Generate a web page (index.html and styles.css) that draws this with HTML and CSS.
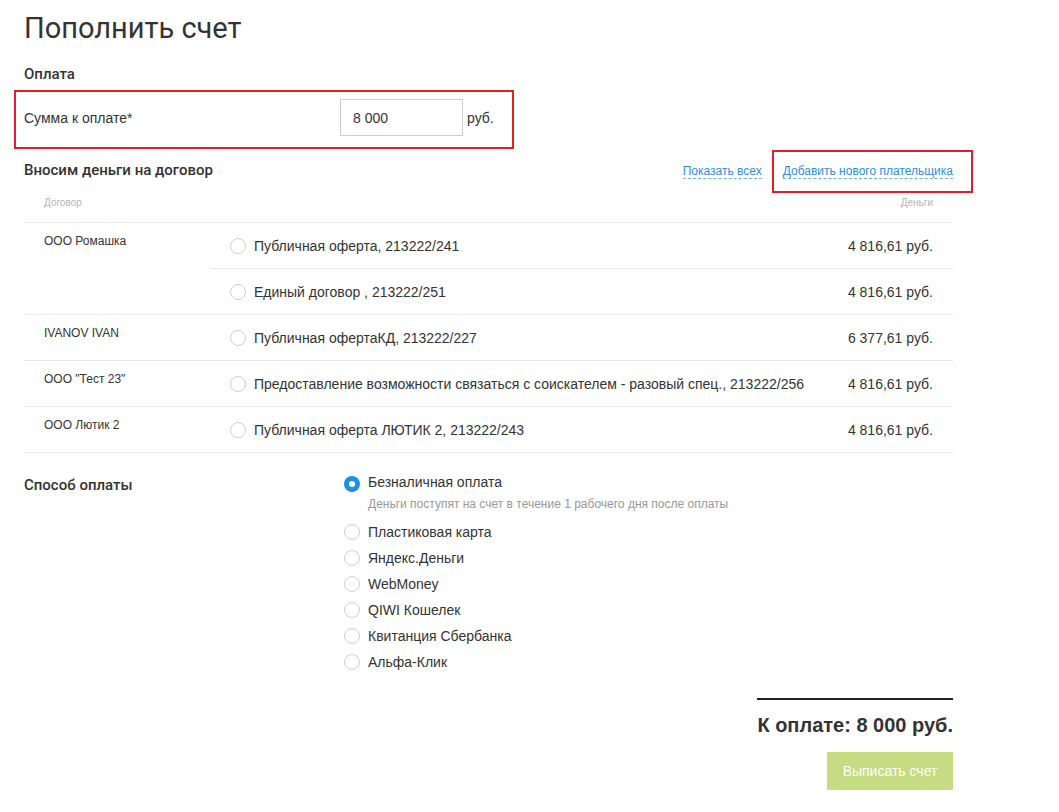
FILE: index.html
```html
<!DOCTYPE html>
<html lang="ru">
<head>
    <meta charset="UTF-8">
    <title>Пополнить счет</title>
    <link rel="stylesheet" href="styles.css">
</head>
<body>
    <div class="page">
        <h1>Пополнить счет</h1>

        <!-- Сумма -->
        <h2>Оплата</h2>
        <div class="highlight amount-box">
            <span class="amount-label">Сумма к оплате*</span>
            <input class="amount-input" type="text" value="8 000">
            <span class="amount-unit">руб.</span>
        </div>

        <!-- Договоры -->
        <div class="contracts-head">
            <h2>Вносим деньги на договор</h2>
            <div class="links">
                <a class="dash-link" href="#">Показать всех</a>
                <span class="highlight add-box"><a class="dash-link" href="#">Добавить нового плательщика</a></span>
            </div>
        </div>

        <div class="contracts">
            <div class="contracts-top">
                <span>Договор</span>
                <span>Деньги</span>
            </div>

            <div class="group">
                <div class="company">ООО Ромашка</div>
                <div class="items">
                    <label class="item"><span class="radio"></span><span class="item-name">Публичная оферта, 213222/241</span><span class="item-sum">4 816,61 руб.</span></label>
                    <label class="item"><span class="radio"></span><span class="item-name">Единый договор , 213222/251</span><span class="item-sum">4 816,61 руб.</span></label>
                </div>
            </div>
            <div class="group">
                <div class="company">IVANOV IVAN</div>
                <div class="items">
                    <label class="item"><span class="radio"></span><span class="item-name">Публичная офертаКД, 213222/227</span><span class="item-sum">6 377,61 руб.</span></label>
                </div>
            </div>
            <div class="group">
                <div class="company">ООО "Тест 23"</div>
                <div class="items">
                    <label class="item"><span class="radio"></span><span class="item-name">Предоставление возможности связаться с соискателем - разовый спец., 213222/256</span><span class="item-sum">4 816,61 руб.</span></label>
                </div>
            </div>
            <div class="group">
                <div class="company">ООО Лютик 2</div>
                <div class="items">
                    <label class="item"><span class="radio"></span><span class="item-name">Публичная оферта ЛЮТИК 2, 213222/243</span><span class="item-sum">4 816,61 руб.</span></label>
                </div>
            </div>
        </div>

        <!-- Способ оплаты -->
        <div class="methods">
            <h2>Способ оплаты</h2>
            <div class="method-list">
                <div class="method checked">
                    <span class="radio"></span>
                    <div>
                        <div>Безналичная оплата</div>
                        <div class="method-note">Деньги поступят на счет в течение 1 рабочего дня после оплаты</div>
                    </div>
                </div>
                <div class="method"><span class="radio"></span>Пластиковая карта</div>
                <div class="method"><span class="radio"></span>Яндекс.Деньги</div>
                <div class="method"><span class="radio"></span>WebMoney</div>
                <div class="method"><span class="radio"></span>QIWI Кошелек</div>
                <div class="method"><span class="radio"></span>Квитанция Сбербанка</div>
                <div class="method"><span class="radio"></span>Альфа-Клик</div>
            </div>
        </div>

        <div class="total">
            <div class="total-sum">К оплате: 8 000 руб.</div>
            <button class="submit">Выписать счет</button>
        </div>
    </div>
</body>
</html>
```

FILE: styles.css
```css
body {
    margin: 0;
    font-family: "Liberation Sans", Arial, sans-serif;
    font-size: 14px;
    color: #333;
    background: #fff;
}

.page {
    width: 929px;
    padding: 0 24px;
}

h1 {
    margin: 8px 0 0;
    font-family: Roboto, "Liberation Sans", sans-serif;
    font-weight: 400;
    font-size: 29px;
    line-height: 40px;
    color: #333;
}

h2 {
    margin: 0;
    font-family: Roboto, "Liberation Sans", sans-serif;
    font-weight: 500;
    font-size: 15px;
    line-height: 20px;
    color: #333;
}

.page > h2 {
    margin-top: 16px;
}

.highlight {
    border: 2px solid #e41e26;
    box-sizing: border-box;
}

.amount-box {
    display: flex;
    align-items: center;
    width: 500px;
    height: 59px;
    margin: 6px 0 0 -10px;
    padding: 7px 0 11px 8px;
}

.amount-label {
    width: 316px;
}

.amount-input {
    width: 123px;
    height: 37px;
    box-sizing: border-box;
    border: 1px solid #ccc;
    padding: 0 12px;
    font-family: inherit;
    font-size: 14px;
    color: #333;
}

.amount-unit {
    margin-left: 4px;
}

.contracts-head {
    display: flex;
    justify-content: space-between;
    align-items: center;
    height: 43px;
    margin-top: 1px;
}

.contracts-head h2 {
    margin-top: -3px;
}

.links {
    display: flex;
    align-items: center;
    margin-right: -20px;
}

.dash-link {
    font-size: 12px;
    color: #2d8fdd;
    text-decoration: none;
    border-bottom: 1px dashed #6bb5ee;
    line-height: 13px;
}

.add-box {
    display: flex;
    align-items: center;
    height: 43px;
    margin-left: 10px;
    padding: 0 18px 0 9px;
}

.contracts-top {
    display: flex;
    justify-content: space-between;
    padding: 4px 20px 0;
    height: 25px;
    font-size: 10px;
    color: #b5b5b5;
    border-bottom: 1px solid #e8e8e8;
}

.group {
    display: grid;
    grid-template-columns: 186px 1fr;
    border-bottom: 1px solid #e8e8e8;
}

.company {
    padding: 11px 0 0 20px;
    font-size: 12px;
}

.item {
    display: flex;
    align-items: center;
    height: 45px;
    padding: 0 20px;
}

.item + .item {
    border-top: 1px solid #e8e8e8;
}

.item-name {
    flex: 1;
}

.radio {
    flex: none;
    width: 16px;
    height: 16px;
    box-sizing: border-box;
    border: 1px solid #cfcfcf;
    border-radius: 50%;
    margin-right: 8px;
    background: #fff;
}

.methods {
    display: grid;
    grid-template-columns: 320px 1fr;
    margin-top: 21px;
}

.methods h2 {
    margin-top: 1px;
}

.method {
    display: flex;
    align-items: center;
    height: 26px;
}

.method.checked {
    align-items: flex-start;
    height: auto;
    padding-bottom: 8px;
}

.method.checked .radio {
    border: 5px solid #1e8fe1;
    margin-top: 2px;
}

.method-note {
    margin-top: 7px;
    font-size: 12px;
    color: #999;
}

.total {
    display: flex;
    flex-direction: column;
    align-items: flex-end;
    margin-top: 23px;
}

.total-sum {
    border-top: 2px solid #222;
    min-width: 194px;
    padding-top: 14px;
    text-align: right;
    white-space: nowrap;
    font-weight: bold;
    font-size: 20px;
    color: #333;
}

.submit {
    margin-top: 15px;
    width: 126px;
    height: 38px;
    border: none;
    background: #c6dc82;
    color: #fff;
    font-family: inherit;
    font-size: 14px;
}
```
